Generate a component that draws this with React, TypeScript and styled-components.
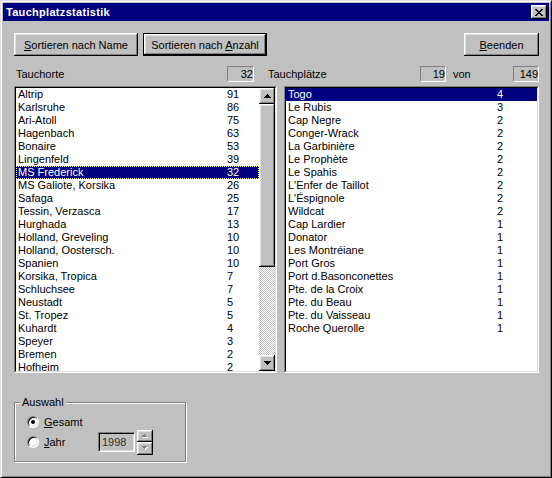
import React from 'react';
import styled, { createGlobalStyle, css } from 'styled-components';

const Global = createGlobalStyle`
  html, body { margin: 0; padding: 0; background: #c0c0c0; }
  body { font-family: "Liberation Sans", Arial, sans-serif; font-size: 11px; }
  * { box-sizing: border-box; }
`;

const raised = css`
  background: #c0c0c0;
  box-shadow: inset -1px -1px #000, inset 1px 1px #fff, inset -2px -2px #808080, inset 2px 2px #dfdfdf;
`;

const Window = styled.div`
  width: 552px;
  height: 478px;
  background: #c0c0c0;
  border: 1px solid;
  border-color: #dfdfdf #000 #000 #dfdfdf;
  box-shadow: inset 1px 1px #fff, inset -1px -1px #808080;
  padding: 2px;
  display: flex;
  flex-direction: column;
  font-family: "Liberation Sans", Arial, sans-serif;
  font-size: 11px;
  color: #000;
`;

const TitleBar = styled.div`
  height: 18px;
  background: #000080;
  display: flex;
  align-items: center;
  padding: 0 2px 0 3px;
`;

const TitleText = styled.div`
  flex: 1;
  color: #fff;
  font-weight: bold;
  font-size: 11px;
  letter-spacing: 0.3px;
`;

const CloseButton = styled.div`
  ${raised};
  width: 16px;
  height: 14px;
  display: flex;
  align-items: center;
  justify-content: center;
  padding-right: 1px;
`;

const Body = styled.div`
  display: flex;
  flex-direction: column;
  padding: 12px 10px 0 11px;
`;

const ButtonRow = styled.div`
  display: flex;
  height: 23px;
  gap: 5px;
`;

const PushButton = styled.button<{ $w: number; $default?: boolean; $push?: boolean }>`
  ${raised};
  width: ${p => p.$w}px;
  height: 23px;
  border: none;
  padding: 0;
  font-family: inherit;
  font-size: 11px;
  color: #000;
  margin-left: ${p => (p.$push ? 'auto' : '0')};
  ${p =>
    p.$default &&
    css`
      border: 1px solid #000;
      box-shadow: inset -1px -1px #000, inset 1px 1px #fff, inset -2px -2px #808080, inset 2px 2px #dfdfdf;
    `}
`;

const HeaderRow = styled.div`
  display: flex;
  align-items: center;
  height: 16px;
  margin-top: 10px;
`;

const HeadLabel = styled.div<{ $w?: number; $ml?: number }>`
  ${p => (p.$w ? `width: ${p.$w}px;` : 'flex: 1;')}
  margin-left: ${p => p.$ml ?? 0}px;
  padding-left: ${p => (p.$w ? 2 : 0)}px;
  white-space: nowrap;
`;

const CountBox = styled.div<{ $w: number }>`
  width: ${p => p.$w}px;
  height: 16px;
  border: 1px solid;
  border-color: #808080 #fff #fff #808080;
  text-align: right;
  line-height: 14px;
  padding-right: 0;
`;

const Von = styled.div`
  width: 67px;
  padding-left: 7px;
`;

const ListsRow = styled.div`
  display: flex;
  gap: 7px;
  height: 287px;
  margin-top: 4px;
`;

const ListFrame = styled.div<{ $w?: number }>`
  ${p => (p.$w ? `width: ${p.$w}px;` : 'flex: 1;')}
  border: 1px solid;
  border-color: #808080 #fff #fff #808080;
  display: flex;
`;

const ListInner = styled.div`
  flex: 1;
  border: 1px solid;
  border-color: #000 #dfdfdf #dfdfdf #000;
  background: #fff;
  display: flex;
  overflow: hidden;
`;

const Rows = styled.div`
  flex: 1;
  overflow: hidden;
`;

const Row = styled.div<{ $sel?: boolean; $focus?: boolean }>`
  display: grid;
  grid-template-columns: 209px 1fr;
  height: 13px;
  line-height: 13px;
  padding-left: 2px;
  white-space: nowrap;
  background: ${p => (p.$sel ? '#000080' : 'transparent')};
  color: ${p => (p.$sel ? '#fff' : '#000')};
  ${p =>
    p.$focus &&
    css`
      outline: 1px dotted #ffff80;
      outline-offset: -1px;
    `}
`;

const Cell = styled.span`
  overflow: hidden;
`;

const ScrollBar = styled.div`
  width: 16px;
  display: flex;
  flex-direction: column;
`;

const ScrollBtn = styled.div`
  ${raised};
  width: 16px;
  height: 16px;
  display: flex;
  align-items: center;
  justify-content: center;
  flex: none;
`;

const Thumb = styled.div<{ $h: number }>`
  ${raised};
  height: ${p => p.$h}px;
  flex: none;
`;

const Track = styled.div`
  flex: 1;
  background: repeating-conic-gradient(#fff 0 25%, #c0c0c0 0 50%) 0 0 / 2px 2px;
`;

const GroupBox = styled.div`
  position: relative;
  width: 172px;
  height: 60px;
  margin-top: 29px;
  border: 1px solid #808080;
  box-shadow: inset 1px 1px #fff, 1px 1px #fff;
  padding: 9px 0 9px 12px;
  display: flex;
  flex-direction: column;
`;

const Caption = styled.div`
  position: absolute;
  left: 5px;
  top: -7px;
  background: #c0c0c0;
  padding: 0 2px;
  line-height: 13px;
`;

const OptionRow = styled.div`
  height: 20px;
  display: flex;
  align-items: center;
`;

const Choice = styled.label`
  width: 71px;
  display: flex;
  align-items: center;
  gap: 5px;
`;

const Radio = styled.span<{ $checked?: boolean }>`
  position: relative;
  width: 12px;
  height: 12px;
  border-radius: 50%;
  border: 1px solid;
  border-color: #808080 #fff #fff #808080;
  background: #fff;
  box-shadow: inset 1px 1px #000, inset -1px -1px #dfdfdf;
  flex: none;
  &::after {
    content: '';
    display: ${p => (p.$checked ? 'block' : 'none')};
    position: absolute;
    left: 3px;
    top: 3px;
    width: 4px;
    height: 4px;
    border-radius: 50%;
    background: #000;
  }
`;

const YearBox = styled.div`
  width: 37px;
  height: 20px;
  border: 1px solid;
  border-color: #808080 #fff #fff #808080;
  box-shadow: inset 1px 1px #000, inset -1px -1px #dfdfdf;
  background: #c0c0c0;
  color: #303030;
  line-height: 18px;
  padding-left: 3px;
`;

const Spin = styled.div`
  margin-left: 2px;
  width: 16px;
  height: 25px;
  display: flex;
  flex-direction: column;
`;

const SpinBtn = styled.div`
  ${raised};
  flex: 1;
  display: flex;
  align-items: center;
  justify-content: center;
`;

const CloseGlyph = () => (
  <svg width="8" height="7" viewBox="0 0 8 7" shapeRendering="crispEdges">
    <path
      fill="#000"
      d="M0 0h2v1H0z M6 0h2v1H6z M1 1h2v1H1z M5 1h2v1H5z M2 2h4v1H2z M3 3h2v1H3z M2 4h4v1H2z M1 5h2v1H1z M5 5h2v1H5z M0 6h2v1H0z M6 6h2v1H6z"
    />
  </svg>
);

const Arrow = ({ down }: { down?: boolean }) => (
  <svg width="7" height="4" viewBox="0 0 7 4" shapeRendering="crispEdges">
    <path
      fill="#000"
      d={down ? 'M0 0h7v1H0z M1 1h5v1H1z M2 2h3v1H2z M3 3h1v1H3z' : 'M3 0h1v1H3z M2 1h3v1H2z M1 2h5v1H1z M0 3h7v1H0z'}
    />
  </svg>
);

const SmallArrow = ({ down }: { down?: boolean }) => {
  const d = down ? 'M0 0h5v1H0z M1 1h3v1H1z M2 2h1v1H2z' : 'M2 0h1v1H2z M1 1h3v1H1z M0 2h5v1H0z';
  return (
    <svg width="6" height="4" viewBox="0 0 6 4" shapeRendering="crispEdges">
      <path fill="#fff" transform="translate(1 1)" d={d} />
      <path fill="#808080" d={d} />
    </svg>
  );
};

const orte: [string, number][] = [
  ['Altrip', 91],
  ['Karlsruhe', 86],
  ['Ari-Atoll', 75],
  ['Hagenbach', 63],
  ['Bonaire', 53],
  ['Lingenfeld', 39],
  ['MS Frederick', 32],
  ['MS Galiote, Korsika', 26],
  ['Safaga', 25],
  ['Tessin, Verzasca', 17],
  ['Hurghada', 13],
  ['Holland, Greveling', 10],
  ['Holland, Oostersch.', 10],
  ['Spanien', 10],
  ['Korsika, Tropica', 7],
  ['Schluchsee', 7],
  ['Neustadt', 5],
  ['St. Tropez', 5],
  ['Kuhardt', 4],
  ['Speyer', 3],
  ['Bremen', 2],
  ['Hofheim', 2],
];

const plaetze: [string, number][] = [
  ['Togo', 4],
  ['Le Rubis', 3],
  ['Cap Negre', 2],
  ['Conger-Wrack', 2],
  ['La Garbinière', 2],
  ['Le Prophète', 2],
  ['Le Spahis', 2],
  ["L'Enfer de Taillot", 2],
  ["L'Éspignole", 2],
  ['Wildcat', 2],
  ['Cap Lardier', 1],
  ['Donator', 1],
  ['Les Montréiane', 1],
  ['Port Gros', 1],
  ['Port d.Basonconettes', 1],
  ['Pte. de la Croix', 1],
  ['Pte. du Beau', 1],
  ['Pte. du Vaisseau', 1],
  ['Roche Querolle', 1],
];

export default function App() {
  return (
    <>
      <Global />
      <Window>
        <TitleBar>
          <TitleText>Tauchplatzstatistik</TitleText>
          <CloseButton>
            <CloseGlyph />
          </CloseButton>
        </TitleBar>
        <Body>
          <ButtonRow>
            <PushButton $w={124}>
              <u>S</u>ortieren nach Name
            </PushButton>
            <PushButton $w={124} $default>
              Sortieren nach <u>A</u>nzahl
            </PushButton>
            <PushButton $w={75} $push>
              <u>B</u>eenden
            </PushButton>
          </ButtonRow>
          <HeaderRow>
            <HeadLabel $w={213}>Tauchorte</HeadLabel>
            <CountBox $w={27}>32</CountBox>
            <HeadLabel $ml={14}>Tauchplätze</HeadLabel>
            <CountBox $w={26}>19</CountBox>
            <Von>von</Von>
            <CountBox $w={26}>149</CountBox>
          </HeaderRow>
          <ListsRow>
            <ListFrame $w={263}>
              <ListInner>
                <Rows>
                  {orte.map(([n, c], i) => (
                    <Row key={n} $sel={i === 6} $focus={i === 6}>
                      <Cell>{n}</Cell>
                      <Cell>{c}</Cell>
                    </Row>
                  ))}
                </Rows>
                <ScrollBar>
                  <ScrollBtn>
                    <Arrow />
                  </ScrollBtn>
                  <Thumb $h={163} />
                  <Track />
                  <ScrollBtn>
                    <Arrow down />
                  </ScrollBtn>
                </ScrollBar>
              </ListInner>
            </ListFrame>
            <ListFrame>
              <ListInner>
                <Rows>
                  {plaetze.map(([n, c], i) => (
                    <Row key={n} $sel={i === 0}>
                      <Cell>{n}</Cell>
                      <Cell>{c}</Cell>
                    </Row>
                  ))}
                </Rows>
              </ListInner>
            </ListFrame>
          </ListsRow>
          <GroupBox>
            <Caption>Auswahl</Caption>
            <OptionRow>
              <Choice>
                <Radio $checked />
                <span>
                  <u>G</u>esamt
                </span>
              </Choice>
            </OptionRow>
            <OptionRow>
              <Choice>
                <Radio />
                <span>
                  <u>J</u>ahr
                </span>
              </Choice>
              <YearBox>1998</YearBox>
              <Spin>
                <SpinBtn>
                  <SmallArrow />
                </SpinBtn>
                <SpinBtn>
                  <SmallArrow down />
                </SpinBtn>
              </Spin>
            </OptionRow>
          </GroupBox>
        </Body>
      </Window>
    </>
  );
}
